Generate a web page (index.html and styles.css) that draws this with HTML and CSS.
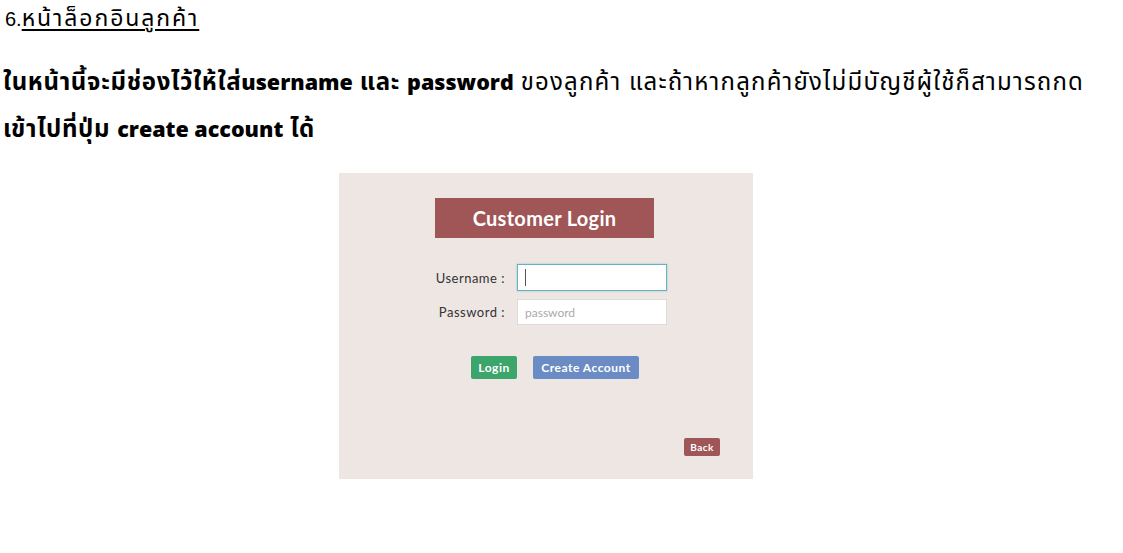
FILE: index.html
```html
<!DOCTYPE html>
<html lang="th">
<head>
<meta charset="utf-8">
<link rel="stylesheet" href="styles.css">
</head>
<body>
<h1 class="heading"><span class="num">6.</span><span class="heading-u">หน้าล็อกอินลูกค้า</span></h1>
<p class="desc"><span class="line">ในหน้านี้จะมีช่องไว้ให้ใส่<b>username</b> และ <b>password</b> <span class="thin">ของลูกค้า และถ้าหากลูกค้ายังไม่มีบัญชีผู้ใช้ก็สามารถกด</span></span><span class="line">เข้าไปที่ปุ่ม <b>create account</b> ได้</span></p>
<div class="panel">
  <div class="title-bar">Customer Login</div>
  <div class="form">
    <label class="lbl">Username :</label>
    <div class="input focused"><span class="caret"></span></div>
    <label class="lbl">Password :</label>
    <div class="input"><span class="ph">password</span></div>
  </div>
  <div class="actions">
    <span class="btn btn-login">Login</span>
    <span class="btn btn-create">Create Account</span>
  </div>
  <div class="back-row">
    <span class="btn btn-back">Back</span>
  </div>
</div>
</body>
</html>
```
FILE: styles.css
```css
html, body { margin: 0; padding: 0; background: #fff; }
body {
  font-family: "Tahoma", "Noto Sans Thai", "Loma", "Garuda", "Liberation Sans", sans-serif;
  color: #000;
  width: 1123px;
  height: 553px;
  overflow: hidden;
}
.heading {
  margin: 0;
  padding: 5px 0 0 5px;
  font-size: 23px;
  font-weight: normal;
  line-height: 28px;
  letter-spacing: 1.9px;
  white-space: nowrap;
}
.num { font-family: "Liberation Sans", sans-serif; font-size: 20px; letter-spacing: 0; }
.heading-u { text-decoration: underline; text-decoration-thickness: 2px; text-underline-offset: 3px; }
.desc {
  margin: 0;
  padding: 26px 0 0 3px;
  font-size: 24px;
  font-weight: bold;
  line-height: 46px;
  letter-spacing: 0.7px;
}
.line { display: block; white-space: nowrap; }
.desc b { font-family: "Open Sans", sans-serif; font-size: 21.5px; letter-spacing: 0; }
.desc .thin { font-weight: normal; letter-spacing: 1.2px; }
.panel {
  margin: 20px 0 0 339px;
  width: 414px;
  height: 306px;
  background: #eee6e3;
  box-sizing: border-box;
  padding-top: 25px;
  display: flex;
  flex-direction: column;
}
.title-bar {
  margin-left: 96px;
  width: 219px;
  height: 40px;
  background: #a05557;
  color: #fff;
  font-family: "Lato", "Open Sans", sans-serif;
  font-weight: bold;
  font-size: 20px;
  display: flex;
  align-items: center;
  justify-content: center;
  letter-spacing: 0.3px;
}
.form {
  margin: 26px 0 0 76px;
  display: grid;
  grid-template-columns: 90px 150px;
  column-gap: 12px;
  row-gap: 8px;
  align-items: center;
}
.lbl {
  text-align: right;
  font-family: "Lato", "Open Sans", sans-serif;
  font-size: 13px;
  letter-spacing: 0.5px;
  color: #333;
}
.input {
  height: 26px;
  box-sizing: border-box;
  background: #fff;
  border: 1px solid #dcdcdc;
  display: flex;
  align-items: center;
  padding-left: 7px;
}
.input.focused {
  height: 27px;
  border: 1px solid #66afc5;
  box-shadow: 0 0 2px rgba(102,175,197,0.6);
}
.caret { width: 1px; height: 17px; background: #555; }
.ph { font-family: "Lato", "Open Sans", sans-serif; font-size: 12px; color: #aaa; }
.actions {
  margin: 31px 0 0 132px;
  display: flex;
  gap: 16px;
}
.btn {
  display: inline-flex;
  align-items: center;
  justify-content: center;
  color: #fff;
  font-family: "Lato", "Open Sans", sans-serif;
  font-weight: bold;
  font-size: 12px;
  letter-spacing: 0.5px;
  border-radius: 2px;
}
.btn-login { width: 46px; height: 23px; background: #3ba56b; }
.btn-create { width: 106px; height: 23px; background: #6a8bc4; }
.back-row {
  margin: 59px 0 0 345px;
  display: flex;
}
.btn-back { width: 36px; height: 18px; background: #a05557; font-size: 10px; }
```
